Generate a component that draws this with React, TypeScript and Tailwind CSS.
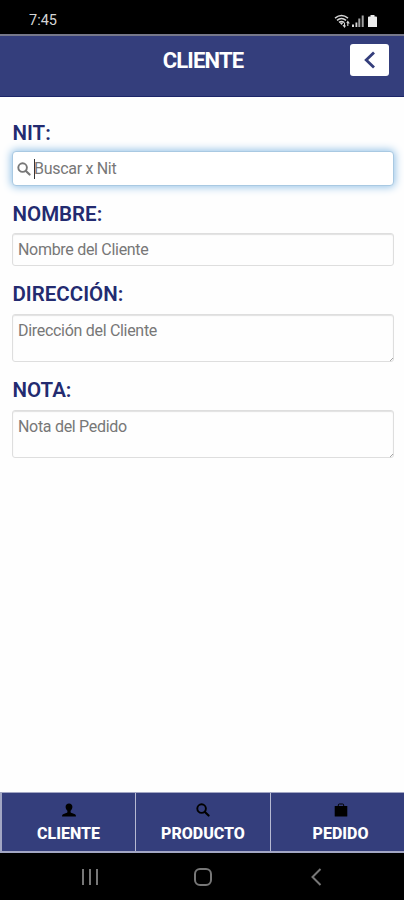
import { ReactNode } from 'react';
import clsx from 'clsx';

function SearchIcon({ className }: { className?: string }) {
  return (
    <svg viewBox="0 0 14 14" className={className} fill="none" stroke="currentColor" strokeLinecap="round">
      <circle cx="5.6" cy="5.6" r="4.3" strokeWidth="1.9" />
      <path d="M8.9 8.9 12.6 12.6" strokeWidth="2.1" />
    </svg>
  );
}

function UserIcon() {
  return (
    <svg viewBox="0 0 14 14" className="h-[14px] w-[14px]" fill="currentColor">
      <path d="M7 0.4c2.1 0 3.4 1.4 3.4 3.3 0 1.6-.8 3.2-1.8 4v1.2c0 .6.4.9 1.2 1.2l2.5 1c1 .4 1.6 1 1.6 1.9v.6H.1V13c0-.9.6-1.5 1.6-1.9l2.5-1c.8-.3 1.2-.6 1.2-1.2V7.7c-1-.8-1.8-2.4-1.8-4C3.6 1.8 4.9.4 7 .4Z" />
    </svg>
  );
}

function BagIcon() {
  return (
    <svg viewBox="0 0 14 14" className="h-[14px] w-[14px]">
      <path d="M4.3 3.5V2q0-1 1-1h3.400q1 0 1 1v1.500" fill="none" stroke="currentColor" strokeWidth="1" />
      <path d="M1.200 3h11.600q.5 0 .5.500v9.500q0 .5-.5.500H1.200q-.5 0-.5-.5V3.500q0-.5.500-.5Z" fill="currentColor" />
    </svg>
  );
}

function StatusBar() {
  return (
    <div className="flex h-[34px] shrink-0 items-center justify-between bg-black pr-[27px] pl-[29px] pt-[7px] text-[#d6d6d6]">
      <span className="pt-[2px] text-[14.5px] leading-none">7:45</span>
      <svg width="43" height="14" viewBox="0 0 43 14" fill="none" stroke="currentColor">
        <path d="M1 4.200Q7.500-1 14 4.200M3 6.300Q7.500 2.600 12 6.300M5 8.400Q7.500 6.400 10 8.400" strokeWidth="1.500" />
        <path d="M5.500 8.500h4L7.500 11Z" fill="currentColor" stroke="none" />
        <path d="M10.500 13V8.500M9 11l1.500 2 1-1.500M13.800 12V7.500M12.800 9l1-1.500 1.500 2" strokeWidth="1.100" />
        <path d="M18 13v-2.500h2V13ZM21.500 13V8.500h1.800V13Z" fill="currentColor" stroke="none" />
        <path d="M25.300 13V4.500M28.700 13V1.500" strokeWidth="2" stroke="#a0a0a0" />
        <path d="M34 3.500q0-1 1-1h1.500V1h4v1.500H42q1 0 1 1V13h-9Z" fill="#ececec" stroke="none" />
      </svg>
    </div>
  );
}

function Header() {
  return (
    <header className="relative flex h-[63px] shrink-0 justify-center border-t-2 border-b border-t-[#77788a] border-b-[#1c2568] bg-[#343e7c] pt-[12px] pl-[2px]">
      <h1 className="text-[22px] leading-[26px] font-bold tracking-[-0.8px] text-white">CLIENTE</h1>
      <button className="absolute top-[8px] right-[15px] flex h-[32px] w-[39px] items-center justify-center rounded-[3px] bg-white">
        <svg width="12" height="18" viewBox="0 0 12 18" fill="none" stroke="#343e7c" strokeWidth="2.800">
          <path d="M10 1.500 2.200 9l7.800 7.500" />
        </svg>
      </button>
    </header>
  );
}

function Field({ label, className, children }: { label: string; className?: string; children: ReactNode }) {
  return (
    <div className={className}>
      <label className="block h-[25px] pl-[0.5px] text-[20.5px] leading-[25px] font-semibold text-[#232b70]">
        {label}
      </label>
      {children}
    </div>
  );
}

const box =
  'w-full rounded-[3px] border border-[#dedede] px-[5px] text-[16px] tracking-[-0.3px] text-[#777] shadow-[inset_0_1px_1px_#e2e2e2]';

function TextArea({ text }: { text: string }) {
  return (
    <div className={clsx(box, 'relative mt-[7px] h-[48px] pt-[6px] leading-[20px]')}>
      {text}
      <svg className="absolute right-0 bottom-0 h-[3px] w-[3px]" viewBox="0 0 4 4" stroke="#888">
        <path d="M0 4 4 0" />
      </svg>
    </div>
  );
}

const tabs = [
  { label: 'CLIENTE', icon: <UserIcon /> },
  { label: 'PRODUCTO', icon: <SearchIcon className="h-[14px] w-[14px]" /> },
  { label: 'PEDIDO', icon: <BagIcon /> },
];

function BottomTabs() {
  return (
    <nav className="grid h-[61px] shrink-0 grid-cols-[134px_135px_139px] overflow-hidden border-t border-b-2 border-l-2 border-[#a2a6c4] bg-[#343e7c]">
      {tabs.map((tab) => (
        <div
          key={tab.label}
          className="flex flex-col items-center border-r border-[#b6b9d2] pt-[10px] text-black last:border-r-0"
        >
          {tab.icon}
          <span className="mt-[7px] text-[16px] leading-[20px] font-extrabold text-white">{tab.label}</span>
        </div>
      ))}
    </nav>
  );
}

function SystemNav() {
  return (
    <div className="grid h-[47px] shrink-0 grid-cols-[180px_46px_180px] items-center bg-black pt-px text-[#777]">
      <svg className="mx-auto" width="18" height="18" viewBox="0 0 18 18" stroke="currentColor" strokeWidth="2">
        <path d="M2 1v16M9 1v16M16 1v16" />
      </svg>
      <svg className="mx-auto" width="18" height="18" viewBox="0 0 18 18" fill="none" stroke="currentColor" strokeWidth="2">
        <rect x="1" y="1" width="16" height="16" rx="5" />
      </svg>
      <svg className="mx-auto" width="12" height="18" viewBox="0 0 12 18" fill="none" stroke="currentColor" strokeWidth="2">
        <path d="M10.500 1 2.500 9l8 8" />
      </svg>
    </div>
  );
}

export default function App() {
  return (
    <div className="flex h-[900px] w-[404px] flex-col overflow-hidden bg-[#fefefe] font-['Roboto',sans-serif]">
      <StatusBar />
      <Header />
      <main className="flex-1 pt-[24px] pr-[10px] pl-[12px]">
        <Field label="NIT:">
          <div className="mt-[5px] flex h-[35px] w-full items-center rounded-[4px] border border-[#a9c9e2] bg-white px-[4px] text-[16px] tracking-[-0.3px] text-[#777] shadow-[0_0_8px_1px_#8fbfe6]">
            <SearchIcon className="h-[14px] w-[14px]" />
            <span className="ml-[3px] h-[20px] w-px bg-[#333]" />
            <span className="-ml-px">Buscar x Nit</span>
          </div>
        </Field>
        <Field label="NOMBRE:" className="mt-[16px]">
          <div className={clsx(box, 'mt-[6px] h-[33px] leading-[32px]')}>Nombre del Cliente</div>
        </Field>
        <Field label="DIRECCIÓN:" className="mt-[16px]">
          <TextArea text="Dirección del Cliente" />
        </Field>
        <Field label="NOTA:" className="mt-[16px]">
          <TextArea text="Nota del Pedido" />
        </Field>
      </main>
      <BottomTabs />
      <SystemNav />
    </div>
  );
}
